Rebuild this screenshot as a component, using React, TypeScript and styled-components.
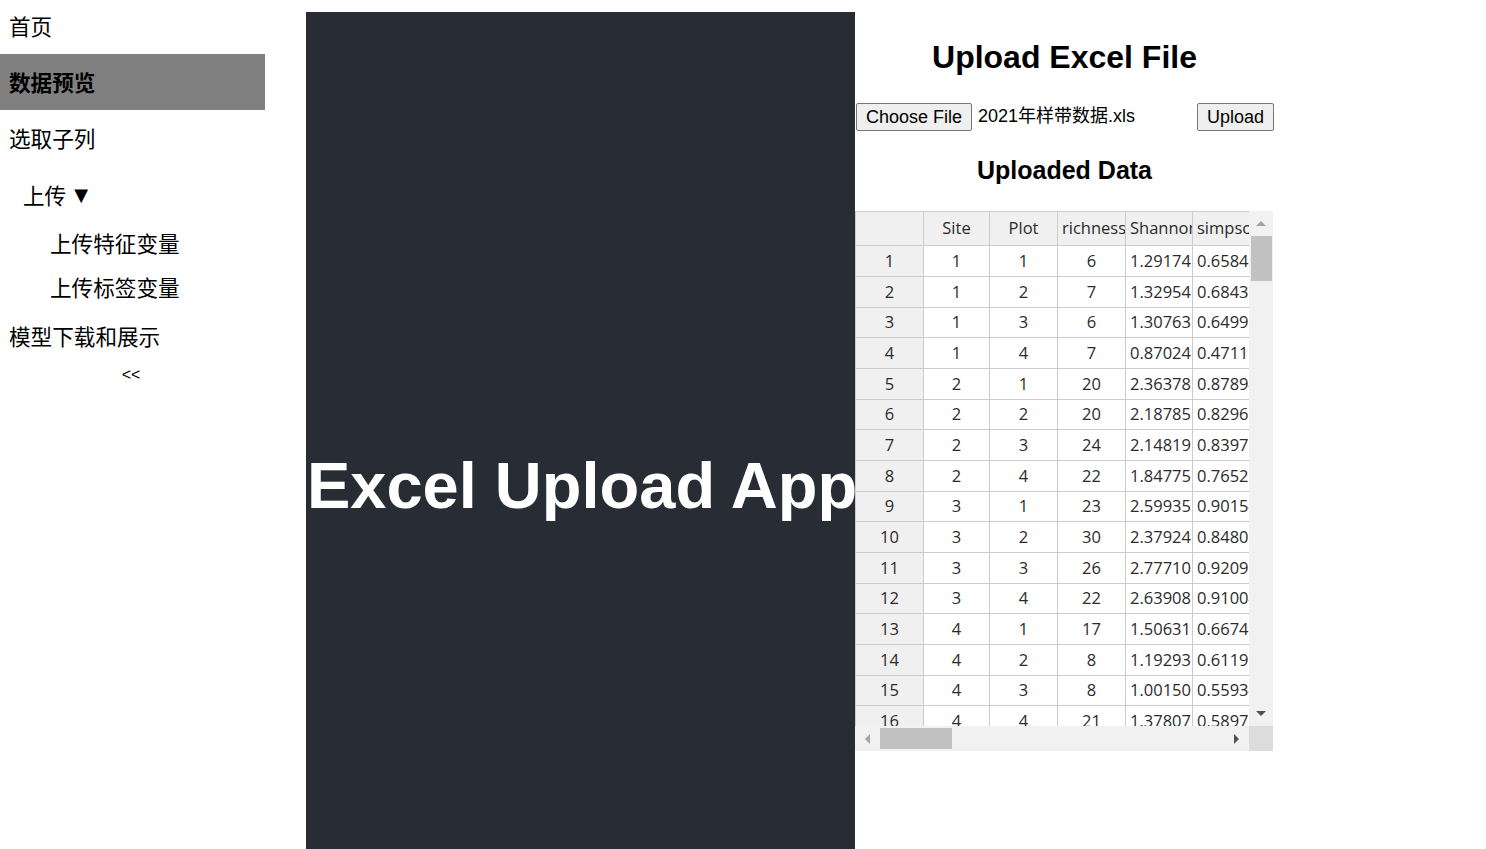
import React from "react";
import styled, { createGlobalStyle } from "styled-components";

const GlobalStyle = createGlobalStyle`
  html, body { margin: 0; padding: 0; overflow: hidden; background: #fff; }
  body { font-family: "Liberation Sans", Arial, sans-serif; color: #000; }
`;

const Page = styled.div`
  display: flex;
  align-items: flex-start;
  width: 1486px;
  height: 849px;
`;

const Sidebar = styled.nav`
  width: 265px;
  flex: none;
  display: flex;
  flex-direction: column;
  font-family: "Noto Sans CJK SC", "Microsoft YaHei", sans-serif;
`;

const NavItem = styled.div<{ $h: number; $indent: number; $active?: boolean; $shift?: number }>`
  display: flex;
  align-items: center;
  box-sizing: border-box;
  height: ${(p) => p.$h}px;
  padding-left: ${(p) => p.$indent}px;
  padding-bottom: ${(p) => 1 - (p.$shift ?? 0)}px;
  padding-top: ${(p) => Math.max(0, p.$shift ?? 0)}px;
  font-size: 21.6px;
  line-height: 1;
  font-weight: ${(p) => (p.$active ? 700 : 400)};
  background: ${(p) => (p.$active ? "#808080" : "transparent")};
  color: #000;
`;

const Caret = styled.span`
  font-family: "DejaVu Sans", sans-serif;
  font-size: 18px;
  line-height: 1;
  margin-left: 8px;
`;

const Collapse = styled.div`
  height: 22px;
  display: flex;
  align-items: center;
  justify-content: center;
  font-family: "Liberation Sans", Arial, sans-serif;
  font-size: 16px;
  padding-right: 3px;
`;

const Main = styled.main`
  display: flex;
  align-items: flex-start;
  margin-left: 41px;
  padding-top: 12px;
`;

const Hero = styled.header`
  width: 549px;
  height: 837px;
  box-sizing: border-box;
  padding-top: 112px;
  padding-left: 3px;
  background: #282c34;
  display: flex;
  align-items: center;
  justify-content: center;
  flex: none;
`;

const HeroTitle = styled.h1`
  margin: 0;
  color: #fff;
  font-size: 65px;
  line-height: 1.15;
  font-weight: 700;
  white-space: nowrap;
`;

const UploadPanel = styled.section`
  width: 419px;
  display: flex;
  flex-direction: column;
`;

const Title = styled.h1`
  margin: 27px 0 0;
  text-align: center;
  font-size: 32px;
  line-height: 37px;
  font-weight: 700;
`;

const FileRow = styled.div`
  display: flex;
  align-items: center;
  margin-top: 27px;
  height: 28px;
  padding-left: 1px;
`;

const NativeButton = styled.button`
  height: 28px;
  box-sizing: border-box;
  padding: 0 9px;
  border: 1px solid #767676;
  border-radius: 2px;
  background: #efefef;
  font-family: "Liberation Sans", Arial, sans-serif;
  font-size: 18px;
  color: #000;
`;

const FileName = styled.span`
  margin-left: 6px;
  font-size: 18px;
  line-height: 20px;
  padding-bottom: 3px;
  font-family: "Liberation Sans", "Noto Sans CJK SC", sans-serif;
  flex: 1;
`;

const SubTitle = styled.h2`
  margin: 25px 0 0;
  text-align: center;
  font-size: 25px;
  line-height: 29px;
  font-weight: 700;
`;

const TableFrame = styled.div`
  margin-top: 26px;
  display: grid;
  grid-template-columns: 394px 24px;
  grid-template-rows: 515px 25px;
`;

const Viewport = styled.div`
  overflow: hidden;
`;

const Grid = styled.div`
  display: grid;
  grid-template-columns: 68px 66px 68px 68px 67px 67px;
  border-top: 1px solid #ccc;
  border-left: 1px solid #ccc;
  font-family: "Open Sans", "Noto Sans", sans-serif;
  font-size: 16.5px;
  color: #2b2b2b;
`;

const Cell = styled.div<{ $head?: boolean; $h: number }>`
  box-sizing: border-box;
  height: ${(p) => p.$h}px;
  border-right: 1px solid #ccc;
  border-bottom: 1px solid #ccc;
  background: ${(p) => (p.$head ? "#f0f0f0" : "#fff")};
  text-align: center;
  line-height: ${(p) => p.$h - 2}px;
  padding: 0 4px;
  white-space: nowrap;
  overflow: hidden;
`;

const VBar = styled.div`
  background: #f1f1f1;
  display: flex;
  flex-direction: column;
`;

const HBar = styled.div`
  background: #f1f1f1;
  display: flex;
  align-items: center;
`;

const ArrowBox = styled.div<{ $w: number; $h: number }>`
  width: ${(p) => p.$w}px;
  height: ${(p) => p.$h}px;
  flex: none;
  display: flex;
  align-items: center;
  justify-content: center;
`;

const VThumb = styled.div`
  height: 45px;
  margin: 0 1px 0 2px;
  background: #c1c1c1;
  flex: none;
`;

const HThumb = styled.div`
  width: 72px;
  height: 21px;
  background: #c1c1c1;
  flex: none;
`;

const Spacer = styled.div`
  flex: 1;
`;

const Corner = styled.div`
  background: #dcdcdc;
`;

const Arrow = ({ dir, color }: { dir: "up" | "down" | "left" | "right"; color: string }) => {
  const pts =
    dir === "up"
      ? "0,5 5,0 10,5"
      : dir === "down"
      ? "0,0 10,0 5,5"
      : dir === "left"
      ? "5,0 5,10 0,5"
      : "0,0 0,10 5,5";
  const w = dir === "up" || dir === "down" ? 10 : 5;
  const h = dir === "up" || dir === "down" ? 5 : 10;
  return (
    <svg width={w} height={h} viewBox={`0 0 ${w} ${h}`}>
      <polygon points={pts} fill={color} />
    </svg>
  );
};

const headers = ["", "Site", "Plot", "richness", "Shannon", "simpson"];
const rows: string[][] = [
  ["1", "1", "6", "1.29174", "0.658432"],
  ["1", "2", "7", "1.32954", "0.684317"],
  ["1", "3", "6", "1.30763", "0.649925"],
  ["1", "4", "7", "0.87024", "0.471106"],
  ["2", "1", "20", "2.36378", "0.878942"],
  ["2", "2", "20", "2.18785", "0.829614"],
  ["2", "3", "24", "2.14819", "0.839721"],
  ["2", "4", "22", "1.84775", "0.765238"],
  ["3", "1", "23", "2.59935", "0.901547"],
  ["3", "2", "30", "2.37924", "0.848016"],
  ["3", "3", "26", "2.77710", "0.920938"],
  ["3", "4", "22", "2.63908", "0.910043"],
  ["4", "1", "17", "1.50631", "0.667412"],
  ["4", "2", "8", "1.19293", "0.611938"],
  ["4", "3", "8", "1.00150", "0.559341"],
  ["4", "4", "21", "1.37807", "0.589752"],
  ["5", "1", "19", "2.41102", "0.872210"],
];

export default function App() {
  return (
    <>
      <GlobalStyle />
      <Page>
        <Sidebar>
          <NavItem $h={54} $indent={9} $shift={-1}>首页</NavItem>
          <NavItem $h={56} $indent={9} $active>数据预览</NavItem>
          <NavItem $h={56} $indent={9}>选取子列</NavItem>
          <NavItem $h={56} $indent={23} $shift={2}>
            上传<Caret>▼</Caret>
          </NavItem>
          <NavItem $h={43} $indent={50}>上传特征变量</NavItem>
          <NavItem $h={44} $indent={50}>上传标签变量</NavItem>
          <NavItem $h={55} $indent={9}>模型下载和展示</NavItem>
          <Collapse>&lt;&lt;</Collapse>
        </Sidebar>
        <Main>
          <Hero>
            <HeroTitle>Excel Upload App</HeroTitle>
          </Hero>
          <UploadPanel>
            <Title>Upload Excel File</Title>
            <FileRow>
              <NativeButton>Choose File</NativeButton>
              <FileName>2021年样带数据.xls</FileName>
              <NativeButton>Upload</NativeButton>
            </FileRow>
            <SubTitle>Uploaded Data</SubTitle>
            <TableFrame>
              <Viewport>
                <Grid>
                  {headers.map((h, i) => (
                    <Cell key={"h" + i} $head $h={34}>
                      {h}
                    </Cell>
                  ))}
                  {rows.map((r, ri) => (
                    <React.Fragment key={ri}>
                      <Cell $head $h={ri % 3 === 2 ? 30 : 31}>{ri + 1}</Cell>
                      {r.map((v, ci) => (
                        <Cell key={ci} $h={ri % 3 === 2 ? 30 : 31}>
                          {v}
                        </Cell>
                      ))}
                    </React.Fragment>
                  ))}
                </Grid>
              </Viewport>
              <VBar>
                <ArrowBox $w={24} $h={25}>
                  <Arrow dir="up" color="#a3a3a3" />
                </ArrowBox>
                <VThumb />
                <Spacer />
                <ArrowBox $w={24} $h={25}>
                  <Arrow dir="down" color="#505050" />
                </ArrowBox>
              </VBar>
              <HBar>
                <ArrowBox $w={25} $h={25}>
                  <Arrow dir="left" color="#a3a3a3" />
                </ArrowBox>
                <HThumb />
                <Spacer />
                <ArrowBox $w={25} $h={25}>
                  <Arrow dir="right" color="#505050" />
                </ArrowBox>
              </HBar>
              <Corner />
            </TableFrame>
          </UploadPanel>
        </Main>
      </Page>
    </>
  );
}
